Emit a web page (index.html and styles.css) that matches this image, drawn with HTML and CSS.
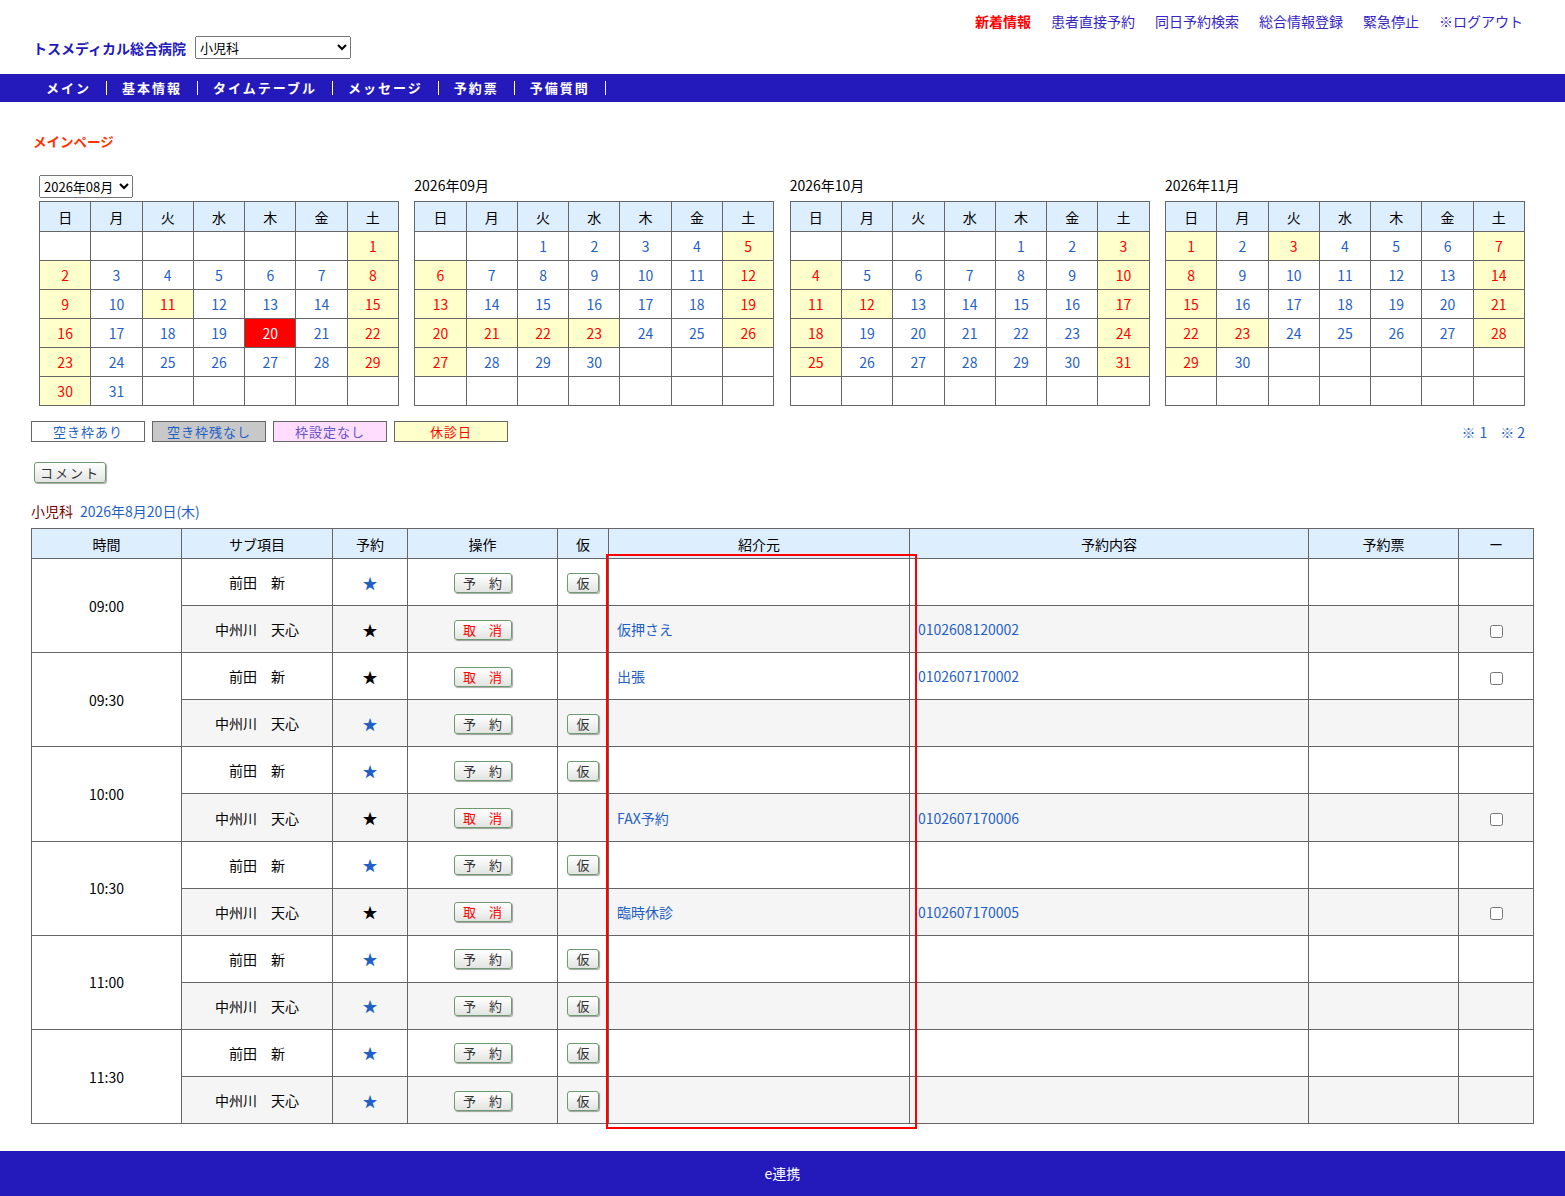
FILE: index.html
```html
<!DOCTYPE html>
<html lang="ja">
<head>
    <meta charset="UTF-8">
    <title>メインページ</title>
    <link rel="stylesheet" href="styles.css">
</head>
<body>
    <div class="header">
        <div class="top-links">
            <a href="#" class="news">新着情報</a>
            <a href="#">患者直接予約</a>
            <a href="#">同日予約検索</a>
            <a href="#">総合情報登録</a>
            <a href="#">緊急停止</a>
            <a href="#">※ログアウト</a>
        </div>
        <div class="hospital">
            <span class="hospital-name">トスメディカル総合病院</span>
            <select class="dept-select">
                <option>小児科</option>
            </select>
        </div>
    </div>

    <ul class="nav">
        <li><a href="#">メイン</a></li>
        <li><a href="#">基本情報</a></li>
        <li><a href="#">タイムテーブル</a></li>
        <li><a href="#">メッセージ</a></li>
        <li><a href="#">予約票</a></li>
        <li><a href="#">予備質問</a></li>
    </ul>

    <div class="content">
        <h2 class="page-title">メインページ</h2>

        <div class="calendars">
            <div class="cal">
                <div class="cal-title">
                    <select class="month-select"><option>2026年08月</option></select>
                </div>
                <table class="cal-table">
                    <tr><th>日</th><th>月</th><th>火</th><th>水</th><th>木</th><th>金</th><th>土</th></tr>
                    <tr><td></td><td></td><td></td><td></td><td></td><td></td><td class="h">1</td></tr>
                    <tr><td class="h">2</td><td>3</td><td>4</td><td>5</td><td>6</td><td>7</td><td class="h">8</td></tr>
                    <tr><td class="h">9</td><td>10</td><td class="h">11</td><td>12</td><td>13</td><td>14</td><td class="h">15</td></tr>
                    <tr><td class="h">16</td><td>17</td><td>18</td><td>19</td><td class="sel">20</td><td>21</td><td class="h">22</td></tr>
                    <tr><td class="h">23</td><td>24</td><td>25</td><td>26</td><td>27</td><td>28</td><td class="h">29</td></tr>
                    <tr><td class="h">30</td><td>31</td><td></td><td></td><td></td><td></td><td></td></tr>
                </table>
            </div>

            <div class="cal">
                <div class="cal-title">2026年09月</div>
                <table class="cal-table">
                    <tr><th>日</th><th>月</th><th>火</th><th>水</th><th>木</th><th>金</th><th>土</th></tr>
                    <tr><td></td><td></td><td>1</td><td>2</td><td>3</td><td>4</td><td class="h">5</td></tr>
                    <tr><td class="h">6</td><td>7</td><td>8</td><td>9</td><td>10</td><td>11</td><td class="h">12</td></tr>
                    <tr><td class="h">13</td><td>14</td><td>15</td><td>16</td><td>17</td><td>18</td><td class="h">19</td></tr>
                    <tr><td class="h">20</td><td class="h">21</td><td class="h">22</td><td class="h">23</td><td>24</td><td>25</td><td class="h">26</td></tr>
                    <tr><td class="h">27</td><td>28</td><td>29</td><td>30</td><td></td><td></td><td></td></tr>
                    <tr><td></td><td></td><td></td><td></td><td></td><td></td><td></td></tr>
                </table>
            </div>

            <div class="cal">
                <div class="cal-title">2026年10月</div>
                <table class="cal-table">
                    <tr><th>日</th><th>月</th><th>火</th><th>水</th><th>木</th><th>金</th><th>土</th></tr>
                    <tr><td></td><td></td><td></td><td></td><td>1</td><td>2</td><td class="h">3</td></tr>
                    <tr><td class="h">4</td><td>5</td><td>6</td><td>7</td><td>8</td><td>9</td><td class="h">10</td></tr>
                    <tr><td class="h">11</td><td class="h">12</td><td>13</td><td>14</td><td>15</td><td>16</td><td class="h">17</td></tr>
                    <tr><td class="h">18</td><td>19</td><td>20</td><td>21</td><td>22</td><td>23</td><td class="h">24</td></tr>
                    <tr><td class="h">25</td><td>26</td><td>27</td><td>28</td><td>29</td><td>30</td><td class="h">31</td></tr>
                    <tr><td></td><td></td><td></td><td></td><td></td><td></td><td></td></tr>
                </table>
            </div>

            <div class="cal">
                <div class="cal-title">2026年11月</div>
                <table class="cal-table">
                    <tr><th>日</th><th>月</th><th>火</th><th>水</th><th>木</th><th>金</th><th>土</th></tr>
                    <tr><td class="h">1</td><td>2</td><td class="h">3</td><td>4</td><td>5</td><td>6</td><td class="h">7</td></tr>
                    <tr><td class="h">8</td><td>9</td><td>10</td><td>11</td><td>12</td><td>13</td><td class="h">14</td></tr>
                    <tr><td class="h">15</td><td>16</td><td>17</td><td>18</td><td>19</td><td>20</td><td class="h">21</td></tr>
                    <tr><td class="h">22</td><td class="h">23</td><td>24</td><td>25</td><td>26</td><td>27</td><td class="h">28</td></tr>
                    <tr><td class="h">29</td><td>30</td><td></td><td></td><td></td><td></td><td></td></tr>
                    <tr><td></td><td></td><td></td><td></td><td></td><td></td><td></td></tr>
                </table>
            </div>
        </div>

        <div class="legend">
            <span class="legend-item free">空き枠あり</span>
            <span class="legend-item full">空き枠残なし</span>
            <span class="legend-item none">枠設定なし</span>
            <span class="legend-item closed">休診日</span>
            <span class="notes"><a href="#">※1</a><a href="#">※2</a></span>
        </div>

        <button class="btn btn-comment">コメント</button>

        <div class="day-title"><span class="dept">小児科</span><span class="date">2026年8月20日(木)</span></div>

        <div class="schedule">
            <table class="sched-table">
                <colgroup>
                    <col style="width:150px"><col style="width:151px"><col style="width:75px">
                    <col style="width:150px"><col style="width:51px"><col style="width:301px">
                    <col style="width:399px"><col style="width:150px"><col style="width:75px">
                </colgroup>
                <tr>
                    <th>時間</th><th>サブ項目</th><th>予約</th><th>操作</th><th>仮</th>
                    <th>紹介元</th><th>予約内容</th><th>予約票</th><th>ー</th>
                </tr>

                <tr>
                    <td class="time" rowspan="2">09:00</td>
                    <td>前田　新</td><td class="star open">★</td>
                    <td><button class="btn btn-row">予　約</button></td>
                    <td><button class="btn btn-temp">仮</button></td>
                    <td class="txt"></td><td class="txt"></td><td></td><td></td>
                </tr>
                <tr class="alt">
                    <td>中州川　天心</td><td class="star">★</td>
                    <td><button class="btn btn-row cancel">取　消</button></td>
                    <td></td>
                    <td class="txt"><a href="#">仮押さえ</a></td><td class="txt"><a href="#">0102608120002</a></td><td></td>
                    <td><input type="checkbox"></td>
                </tr>

                <tr>
                    <td class="time" rowspan="2">09:30</td>
                    <td>前田　新</td><td class="star">★</td>
                    <td><button class="btn btn-row cancel">取　消</button></td>
                    <td></td>
                    <td class="txt"><a href="#">出張</a></td><td class="txt"><a href="#">0102607170002</a></td><td></td>
                    <td><input type="checkbox"></td>
                </tr>
                <tr class="alt">
                    <td>中州川　天心</td><td class="star open">★</td>
                    <td><button class="btn btn-row">予　約</button></td>
                    <td><button class="btn btn-temp">仮</button></td>
                    <td class="txt"></td><td class="txt"></td><td></td><td></td>
                </tr>

                <tr>
                    <td class="time" rowspan="2">10:00</td>
                    <td>前田　新</td><td class="star open">★</td>
                    <td><button class="btn btn-row">予　約</button></td>
                    <td><button class="btn btn-temp">仮</button></td>
                    <td class="txt"></td><td class="txt"></td><td></td><td></td>
                </tr>
                <tr class="alt">
                    <td>中州川　天心</td><td class="star">★</td>
                    <td><button class="btn btn-row cancel">取　消</button></td>
                    <td></td>
                    <td class="txt"><a href="#">FAX予約</a></td><td class="txt"><a href="#">0102607170006</a></td><td></td>
                    <td><input type="checkbox"></td>
                </tr>

                <tr>
                    <td class="time" rowspan="2">10:30</td>
                    <td>前田　新</td><td class="star open">★</td>
                    <td><button class="btn btn-row">予　約</button></td>
                    <td><button class="btn btn-temp">仮</button></td>
                    <td class="txt"></td><td class="txt"></td><td></td><td></td>
                </tr>
                <tr class="alt">
                    <td>中州川　天心</td><td class="star">★</td>
                    <td><button class="btn btn-row cancel">取　消</button></td>
                    <td></td>
                    <td class="txt"><a href="#">臨時休診</a></td><td class="txt"><a href="#">0102607170005</a></td><td></td>
                    <td><input type="checkbox"></td>
                </tr>

                <tr>
                    <td class="time" rowspan="2">11:00</td>
                    <td>前田　新</td><td class="star open">★</td>
                    <td><button class="btn btn-row">予　約</button></td>
                    <td><button class="btn btn-temp">仮</button></td>
                    <td class="txt"></td><td class="txt"></td><td></td><td></td>
                </tr>
                <tr class="alt">
                    <td>中州川　天心</td><td class="star open">★</td>
                    <td><button class="btn btn-row">予　約</button></td>
                    <td><button class="btn btn-temp">仮</button></td>
                    <td class="txt"></td><td class="txt"></td><td></td><td></td>
                </tr>

                <tr>
                    <td class="time" rowspan="2">11:30</td>
                    <td>前田　新</td><td class="star open">★</td>
                    <td><button class="btn btn-row">予　約</button></td>
                    <td><button class="btn btn-temp">仮</button></td>
                    <td class="txt"></td><td class="txt"></td><td></td><td></td>
                </tr>
                <tr class="alt">
                    <td>中州川　天心</td><td class="star open">★</td>
                    <td><button class="btn btn-row">予　約</button></td>
                    <td><button class="btn btn-temp">仮</button></td>
                    <td class="txt"></td><td class="txt"></td><td></td><td></td>
                </tr>
            </table>
            <div class="highlight"></div>
        </div>
    </div>

    <div class="footer">e連携</div>
</body>
</html>
```

FILE: styles.css
```css
* {
    box-sizing: border-box;
}

body {
    margin: 0;
    font-family: "Noto Sans CJK JP", "Noto Sans", sans-serif;
    font-size: 14px;
    color: #000;
    background: #fff;
}

a {
    text-decoration: none;
}

/* header */
.header {
    height: 74px;
}

.top-links {
    display: flex;
    justify-content: flex-end;
    gap: 20px;
    padding: 11px 42px 0 0;
    line-height: 20px;
}

.top-links a {
    color: #3626c4;
    font-size: 14px;
}

.top-links a.news {
    color: #ff0000;
    font-weight: bold;
}

.hospital {
    display: flex;
    align-items: center;
    gap: 9px;
    padding: 5px 0 0 33px;
}

.hospital-name {
    color: #2419bb;
    font-size: 14px;
    font-weight: bold;
    line-height: 20px;
}

.dept-select {
    width: 156px;
    font-family: inherit;
    font-size: 13px;
    padding: 0;
}

/* nav */
.nav {
    display: flex;
    align-items: center;
    height: 28px;
    margin: 0;
    padding: 0 0 0 31px;
    list-style: none;
    background: #2419bb;
}

.nav a {
    display: block;
    padding: 0 15px;
    border-right: 1px solid #fff;
    color: #fff;
    font-size: 13px;
    font-weight: bold;
    letter-spacing: 2px;
    line-height: 14px;
}

/* content */
.content {
    padding: 0 32px 0 31px;
}

.page-title {
    margin: 29px 0 0 2px;
    color: #ff3300;
    font-size: 13.5px;
    line-height: 20px;
}

.calendars {
    display: flex;
    justify-content: space-between;
    padding: 0 8px;
    margin-top: 24px;
}

.cal-title {
    height: 26px;
    line-height: 20px;
    font-size: 14px;
}

.month-select {
    width: 94px;
    font-family: inherit;
    font-size: 13px;
    padding: 0;
    vertical-align: top;
}

.cal-table {
    width: 360px;
    border-collapse: collapse;
    table-layout: fixed;
}

.cal-table th,
.cal-table td {
    border: 1px solid #666;
    text-align: center;
    font-size: 14px;
    padding: 0;
}

.cal-table th {
    height: 30px;
    background: #ddeeff;
    font-weight: normal;
}

.cal-table td {
    height: 29px;
    color: #1f5fc6;
}

.cal-table td.h {
    background: #ffffcc;
    color: #ff0000;
}

.cal-table td.sel {
    background: #ff0000;
    color: #fff;
}

/* legend */
.legend {
    display: flex;
    align-items: center;
    gap: 7px;
    margin-top: 15px;
}

.legend-item {
    width: 114px;
    height: 21px;
    border: 1px solid #666;
    text-align: center;
    font-size: 13px;
    line-height: 19px;
    letter-spacing: 1px;
}

.legend-item.free {
    color: #1f5fc6;
}

.legend-item.full {
    background: #c8c8c8;
    color: #1f5fc6;
}

.legend-item.none {
    background: #ffddff;
    color: #6152c8;
}

.legend-item.closed {
    background: #ffffcc;
    color: #ff0000;
}

.notes {
    margin-left: auto;
    padding-right: 8px;
    display: flex;
    gap: 9px;
}

.notes a {
    color: #1f5fc6;
    font-size: 14px;
    letter-spacing: 4px;
}

.notes a:last-child {
    letter-spacing: 3px;
    margin-right: -3px;
}

/* buttons */
.btn {
    font-family: inherit;
    border: 1px solid #6f9a6f;
    border-radius: 3px;
    background: linear-gradient(#ffffff, #e2e4e2);
    box-shadow: 1px 1px 1px rgba(0, 0, 0, 0.35);
    color: #333;
    cursor: pointer;
    padding: 0;
}

.btn-comment {
    display: block;
    width: 72px;
    height: 21px;
    margin: 20px 0 0 3px;
    font-size: 13px;
    letter-spacing: 2px;
    line-height: 19px;
}

.btn-row {
    width: 58px;
    height: 20px;
    font-size: 13px;
    line-height: 18px;
}

.btn-row.cancel {
    color: #ff0000;
}

.btn-temp {
    width: 32px;
    height: 20px;
    font-size: 13px;
    line-height: 18px;
}

.day-title {
    margin-top: 18px;
    line-height: 20px;
    font-size: 14px;
}

.day-title .dept {
    color: #7a0000;
    margin-right: 7px;
}

.day-title .date {
    color: #1f5fc6;
}

/* schedule table */
.schedule {
    position: relative;
    margin-top: 7px;
}

.sched-table {
    width: 100%;
    border-collapse: collapse;
    table-layout: fixed;
}

.sched-table th,
.sched-table td {
    border: 1px solid #666;
    text-align: center;
    font-size: 14px;
    padding: 0;
}

.sched-table th {
    height: 30px;
    background: #ddeeff;
    font-weight: normal;
}

.sched-table td {
    height: 47.1px;
    background: #fff;
}

.sched-table tr.alt td {
    background: #f5f5f5;
}

.sched-table td.time {
    background: #fff;
}

.sched-table td.txt {
    text-align: left;
    padding-left: 8px;
}

.sched-table td.txt a {
    color: #1f5fc6;
}

.sched-table td.star {
    font-size: 15px;
    color: #000;
}

.sched-table td.star.open {
    color: #1f5fc6;
}

.sched-table input[type="checkbox"] {
    margin: 0;
    width: 13px;
    height: 13px;
    vertical-align: middle;
}

.highlight {
    position: absolute;
    top: 26px;
    left: 575px;
    width: 311px;
    height: 575px;
    border: 2px solid #ff0000;
    pointer-events: none;
}

/* footer */
.footer {
    margin-top: 27px;
    height: 45px;
    line-height: 45px;
    background: #2419bb;
    color: #fff;
    text-align: center;
    font-size: 14px;
}
```
